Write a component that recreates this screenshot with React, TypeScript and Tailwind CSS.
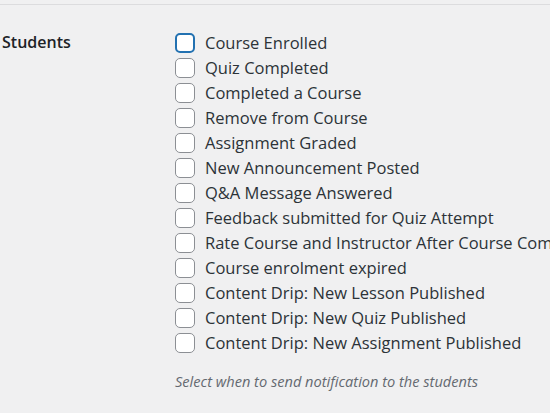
import { useState } from 'react';

const options = [
    'Course Enrolled',
    'Quiz Completed',
    'Completed a Course',
    'Remove from Course',
    'Assignment Graded',
    'New Announcement Posted',
    'Q&A Message Answered',
    'Feedback submitted for Quiz Attempt',
    'Rate Course and Instructor After Course Completed',
    'Course enrolment expired',
    'Content Drip: New Lesson Published',
    'Content Drip: New Quiz Published',
    'Content Drip: New Assignment Published',
];

export default function App() {
    const [checked, setChecked] = useState<Record<string, boolean>>({});

    return (
        <div
            className="h-[413px] w-full overflow-hidden bg-[#f0f0f1] text-[#2c3338]"
            style={{ fontFamily: '"Open Sans", "Noto Sans", sans-serif' }}
        >
            <div className="h-[5px] border-b border-[#dcdcde]" />
            <div className="flex pl-[2px] pt-[25px]">
                <div className="w-[173px] shrink-0 text-[16px] font-semibold leading-[25px] text-[#1d2327]">
                    Students
                </div>
                <div>
                    <fieldset className="flex flex-col">
                        {options.map((label, i) => (
                            <label key={label} className="flex h-[25px] items-center gap-[10px] whitespace-nowrap">
                                <input
                                    type="checkbox"
                                    checked={!!checked[label]}
                                    onChange={() => setChecked({ ...checked, [label]: !checked[label] })}
                                    className={
                                        'h-[20px] w-[20px] shrink-0 appearance-none rounded-[5px] bg-white ' +
                                        (i === 0
                                            ? 'border-2 border-[#2271b1]'
                                            : 'border border-[#8c8f94]')
                                    }
                                />
                                <span className="text-[16.5px] leading-[25px]">{label}</span>
                            </label>
                        ))}
                    </fieldset>
                    <p className="mt-[16px] text-[14.6px] italic leading-[20px] text-[#646970]">
                        Select when to send notification to the students
                    </p>
                </div>
            </div>
        </div>
    );
}
